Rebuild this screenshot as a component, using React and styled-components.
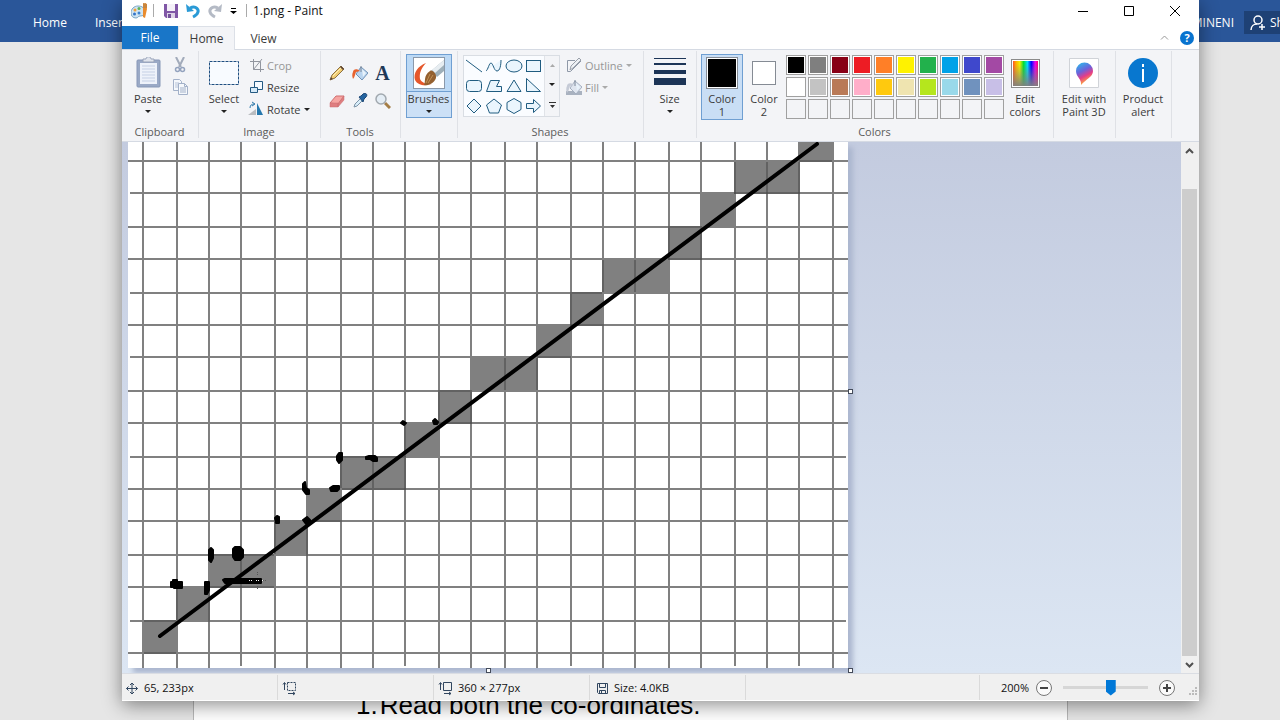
import { useState } from "react";
import styled, { createGlobalStyle, css } from "styled-components";

const palette = [
  "#000000", "#7f7f7f", "#880015", "#ed1c24", "#ff7f27", "#fff200", "#22b14c", "#00a2e8", "#3f48cc", "#a349a4",
  "#ffffff", "#c3c3c3", "#b97a57", "#ffaec9", "#ffc90e", "#efe4b0", "#b5e61d", "#99d9ea", "#7092be", "#c8bfe7",
  null, null, null, null, null, null, null, null, null, null,
];

const shapes = [
  ["Line", <path d="M2 4l16 12" />],
  ["Curve", <path d="M2 15c2-1 3-8 5-8s3 8 6 8c3 0 4-6 4-11" />],
  ["Oval", <ellipse cx="10" cy="10" rx="8" ry="6" />],
  ["Rectangle", <rect x="2.5" y="4.5" width="14" height="11" />],
  ["Rounded rectangle", <rect x="2.5" y="4.5" width="15" height="11" rx="3" />],
  ["Polygon", <path d="M6.500 4.500h9l-3 6h5v5h-15z" />],
  ["Triangle", <path d="M10 4l7 11.500H3z" />],
  ["Right triangle", <path d="M2.500 2.500v13h14z" />],
  ["Diamond", <path d="M10 3l7 7-7 7-7-7z" />],
  ["Pentagon", <path d="M10 3l7.500 6-3 8h-9l-3-8z" />],
  ["Hexagon", <path d="M10 2.500l7 4v7l-7 4-7-4v-7z" />],
  ["Right arrow", <path d="M2.500 7.500h7v-4l7 6.500-7 6.500v-4h-7z" />],
];

// grid line positions in canvas coordinates
const columns = [15, 49, 81, 113, 147, 179, 213, 245, 277, 311, 343, 377, 409, 443, 475, 507, 541, 573, 607, 639, 671, 705];
const rows = [19, 51, 85, 117, 151, 183, 215, 249, 281, 315, 347, 379, 413, 445, 479, 511];
const shortColumns = [113, 277, 443, 607, 671];
const shortRows = [51, 151, 215, 315, 479];

// [x, y, width, height]
const cells = [
  [14, 478, 36, 34], [48, 444, 34, 36], [80, 412, 34, 34], [112, 412, 36, 34],
  [146, 378, 34, 36], [178, 346, 36, 34], [212, 314, 34, 34], [244, 314, 34, 34],
  [276, 280, 36, 36], [310, 248, 34, 34], [342, 214, 36, 36], [376, 214, 34, 36],
  [408, 182, 36, 34], [442, 150, 34, 34], [474, 116, 34, 36], [506, 116, 36, 36],
  [540, 84, 34, 34], [572, 50, 36, 36], [606, 18, 34, 34], [638, 18, 34, 34], [670, 0, 35, 20],
];

const edges =
  "M16 479h32M16 511h32M49 446v32M81 446v34M82 413h64M113 414v32M82 445h64M147 380v32M179 380v34M180 379h34M213 316v30M214 315h64M245 316v30M214 347h64M277 316v32M277 281v34M311 250v32M310 249h34M343 250v32M310 281h34M377 216v32M409 216v32M409 215h34M443 152v32M442 151h32M442 183h34M475 118v32M507 118v32M541 86v32M540 85h34M573 86v32M540 117h34M607 20v32M639 20v32M606 51h66M671 20v32M671 19h33";

const dabs =
  "M43 440h2v-2h4v2h5v6h-8v-1h-3zM77 440h4v8l-2 4h-2zM81 408l2-2 2 2v8l-2 4-2-2zM105 407l2-2h5l3 3v7l-3 3h-5l-2-3zM95 438l2-1h36v4H97zM147 376l2-2 2 1v6h-3zM175 378l4-3 3 3v3l-4 1zM175 342l2-2 1 6 3 2v4h-3l-3-4zM202 346l3-2h6v3l-2 2h-6zM209 314l2-3h3v7l-3 3-2-3zM238 315l3-1h6l2 2v3h-4l-3-2h-4zM273 281l2-2 3 2-2 2zM305 279l2-2 3 3-1 2h-3z";

const Icon = ({ size = 16, children }) => (
  <svg width={size} height={size} viewBox={`0 0 ${size} ${size}`} fill="none" aria-hidden="true">
    {children}
  </svg>
);

const Arrow = ({ color = "#222" }) => (
  <svg width="6" height="3" viewBox="0 0 6 3" aria-hidden="true">
    <path d="M0 0h6L3 3z" fill={color} />
  </svg>
);

const PaintLogo = () => (
  <Icon>
    <path d="M7 3C3 3 0 6 0 10c0 3 2 5 5 5 2 0 2-2 4-2 3 0 5-1 5-4 0-4-3-6-7-6z" fill="#cfe4f2" stroke="#7ba7c5" />
    <circle cx="4" cy="7" r="1.500" fill="#f0a13a" />
    <circle cx="8" cy="5.500" r="1.500" fill="#5db357" />
    <circle cx="3.500" cy="11" r="1.500" fill="#3375c8" />
    <circle cx="8" cy="10" r="1.500" fill="#3e83cf" />
    <path d="M12 1l3-1 1 6-2 9-2-1z" fill="#e98b2d" />
    <path d="M12 0l4 1v4h-4z" fill="#c9863e" />
  </Icon>
);

const SaveIcon = () => (
  <Icon>
    <path d="M1 1h14v14H3l-2-2z" fill="#8057a6" />
    <path d="M4 1h8v7H4z" fill="#f4f0f8" />
    <path d="M4 10h8v5H4z" fill="#ddd3e6" />
    <path d="M5 11h3v4H5z" fill="#72519a" />
  </Icon>
);

const UndoIcon = ({ flip }) => (
  <Icon>
    <g transform={flip ? "translate(16 0) scale(-1 1)" : undefined}>
      <path d="M5 5c6-3 10 2 7 6-1 1-2 2-4 3" stroke={flip ? "#b4bac5" : "#2a9ad6"} strokeWidth="3" />
      <path d="M1 1l1 8 7-1z" fill={flip ? "#b4bac5" : "#2a9ad6"} />
    </g>
  </Icon>
);

const PasteIcon = () => (
  <Icon size={32}>
    <rect x="5" y="3" width="23" height="27" rx="1" fill="#9aa9c6" stroke="#8797b7" />
    <path d="M8 6h17v21H8z" fill="#eef2fa" />
    <path d="M10 9h13M10 12h13M10 15h13M10 18h13M10 21h13M10 24h13" stroke="#c5d0e5" />
    <path d="M11 5V2h3c0-3 5-3 5 0h3v3z" fill="#dfe3ec" stroke="#9aa4b9" />
  </Icon>
);

const CutIcon = () => (
  <Icon>
    <path d="M4 0l5 10M12 0L7 10" stroke="#a2abbb" strokeWidth="2" />
    <circle cx="5.500" cy="12.500" r="2" stroke="#94a3be" strokeWidth="1.500" />
    <circle cx="10.500" cy="12.500" r="2" stroke="#94a3be" strokeWidth="1.500" />
  </Icon>
);

const CopyIcon = () => (
  <Icon>
    <path d="M1.500.5h6l2 2v9h-8z" fill="#f5f8fc" stroke="#a3b1c9" />
    <path d="M3 4h4M3 6h4M3 8h3" stroke="#b7c3d8" />
    <path d="M6.500 4.500h6l3 3v8h-9z" fill="#f5f8fc" stroke="#a3b1c9" />
    <path d="M12.500 4.500v3h3M8 9h6M8 11h6M8 13h6" stroke="#a3b1c9" />
  </Icon>
);

const SelectIcon = () => (
  <Icon size={32}>
    <rect x="1.500" y="4.500" width="29" height="23" fill="#f8fbff" stroke="#1e4e80" strokeDasharray="3 1" />
  </Icon>
);

const CropIcon = () => (
  <Icon>
    <path d="M5.500 2v10.500H16M2 4.500h10.500V15M5.500 12.500L14 2" stroke="#92969f" />
  </Icon>
);

const ResizeIcon = () => (
  <Icon>
    <path d="M6.500 2.500h8v8h-8z" fill="#f5faff" stroke="#245a82" />
    <path d="M2.500 8.500h7v5h-7z" fill="#d6eaf8" stroke="#245a82" />
  </Icon>
);

const RotateIcon = () => (
  <Icon>
    <path d="M0 14l8-6v6z" fill="#b9bcc0" />
    <path d="M9 2l6 12H9z" fill="#2577ad" />
    <path d="M2 7c0-3 2-4 4-4M4 1l3 2-3 2" stroke="#2f79aa" />
  </Icon>
);

const PencilIcon = () => (
  <Icon>
    <path d="M1 15l2-5 9-9 3 3-9 9z" fill="#f1cd74" stroke="#8d7142" />
    <path d="M4 11l8-8" stroke="#fff0b8" />
    <path d="M1 15l1-3 2 2zM11 2l1-1 3 3-1 1z" fill="#5b4335" />
  </Icon>
);

const BucketIcon = ({ muted }) => (
  <Icon>
    {muted && <path d="M0 12h16v4H0z" fill="#a9b2c0" />}
    <path d="M9 2l7 6-6 7-6-6z" fill={muted ? "#dfe5ef" : "#b9d4ef"} stroke={muted ? "#a4afc0" : "#7292b6"} />
    <path d="M10 4l4 4-3 4z" fill="#e8f2fb" />
    <path d="M8 6c-3-3-7-2-7 1-1 2-1 4 0 7 2-2 2-5 3-7z" fill={muted ? "#c5cad6" : "#e8622e"} />
    <path d="M9 1v6" stroke="#7b8798" />
  </Icon>
);

const EraserIcon = () => (
  <Icon>
    <path d="M1 10l6-7h8l-6 8z" fill="#f6a5a2" stroke="#cf6f70" />
    <path d="M1 10h8v4H1zM9 14l6-7V3l-6 8z" fill="#df7e80" stroke="#c86f70" strokeWidth=".5" />
  </Icon>
);

const DropperIcon = () => (
  <Icon>
    <path d="M2 14l1-3 6-6 2 2-6 6z" fill="#d8edf9" stroke="#7d94a8" />
    <path d="M7 4l2-1 2-2c3-2 5 1 3 3l-2 2-1 3z" fill="#24649f" stroke="#1d4777" />
  </Icon>
);

const ZoomIcon = () => (
  <Icon>
    <path d="M10 10l5 5" stroke="#a47d46" strokeWidth="3" />
    <circle cx="6" cy="6" r="5" fill="#e4edf5" stroke="#a1a8af" strokeWidth="1.500" />
  </Icon>
);

const BrushIcon = () => (
  <Icon size={32}>
    <rect x=".5" y=".5" width="31" height="31" fill="#fff" stroke="#8b99aa" />
    <path d="M13 6C5 9 0 16 2 23c3 6 11 6 17 4-5 1-10-1-12-5-1-5 1-11 6-16z" fill="#e5572b" />
    <path d="M31 3v11l-7 6-6-6z" fill="#9eafb9" />
    <path d="M31 3v5l-9 8-3-3z" fill="#e7edf1" />
    <path d="M17 14c2-2 7 3 6 7-2 6-9 8-12 7 2-4-1-9 6-14z" fill="#94602f" />
    <path d="M17 17l-4 9M20 18l-5 8" stroke="#c29257" />
  </Icon>
);

const OutlineIcon = () => (
  <Icon>
    <path d="M9 3.500H1.500v11h3L15 4" stroke="#8e98a7" />
    <path d="M4 13l1-4 8-8 2 2-8 8z" fill="#edf0f4" stroke="#9aa0aa" />
  </Icon>
);

const GlobalStyle = createGlobalStyle`
  * { box-sizing: border-box; }
  body {
    margin: 0;
    overflow: hidden;
    font-family: "Open Sans", "Noto Sans", sans-serif;
    font-size: 12px;
    color: #3b3b3b;
  }
  button {
    font: inherit;
    color: inherit;
    background: none;
    border: 0;
    padding: 0;
  }
  svg { display: block; flex: none; }
`;

const Desktop = styled.div`
  position: relative;
  display: flex;
  flex-direction: column;
  height: 100vh;
  background: #e6e6e6;
  overflow: hidden;
`;

const WordBar = styled.header`
  display: flex;
  align-items: center;
  gap: 28px;
  height: 42px;
  padding: 3px 0 0 33px;
  background: #2a5699;
  color: #fff;
  font-size: 12px;
`;

const WordRight = styled.div`
  display: flex;
  align-items: center;
  gap: 10px;
  margin-left: auto;
`;

const ShareButton = styled.button`
  display: flex;
  align-items: center;
  gap: 4px;
  width: 36px;
  height: 23px;
  padding-left: 6px;
  background: #1e4175;
  overflow: hidden;
  white-space: nowrap;
`;

const WordPage = styled.main`
  flex: 1;
  display: flex;
  align-items: flex-end;
  margin: 0 212px 0 193px;
  padding-left: 162px;
  background: #fff;
  border: solid #b8b8b8;
  border-width: 0 1px;
`;

const Step = styled.p`
  display: flex;
  gap: 2px;
  margin: 0;
  color: #000;
  font: 26px/30px "Liberation Sans", Arial, sans-serif;
`;

const Window = styled.section`
  position: absolute;
  inset: 0 81px 19px 122px;
  display: flex;
  flex-direction: column;
  background: #fff;
  box-shadow: 0 4px 18px rgba(0, 0, 0, 0.45);
`;

const TitleBar = styled.div`
  display: flex;
  align-items: center;
  height: 26px;
  padding: 0 1px 5px 9px;
  color: #111;
`;

const QuickButton = styled.button`
  display: grid;
  place-items: center;
  width: ${({ $narrow }) => ($narrow ? 14 : 22)}px;
  height: 22px;
`;

const Divider = styled.span`
  width: 1px;
  height: 13px;
  margin: 0 6px;
  background: #aaa;
`;

const Title = styled.h1`
  margin: 0;
  font-size: 12px;
  font-weight: 400;
`;

const WindowControls = styled.div`
  display: flex;
  margin-left: auto;
`;

const ControlButton = styled.button`
  display: grid;
  place-items: center;
  width: 46px;
  height: 22px;
`;

const Tabs = styled.nav`
  display: flex;
  height: 24px;
  border-bottom: 1px solid #d5dae3;
`;

const Tab = styled.button`
  width: ${({ $kind }) => ($kind === "file" ? 56 : 57)}px;
  height: 24px;
  font-size: 12px;
  ${({ $kind }) =>
    $kind === "file" &&
    css`
      height: 23px;
      background: #1976c8;
      color: #fff;
    `}
  ${({ $kind }) =>
    $kind === "active" &&
    css`
      background: #f3f4f7;
      border: solid #dce0e7;
      border-width: 1px 1px 0;
    `}
`;

const TabTools = styled.div`
  display: flex;
  align-items: center;
  gap: 11px;
  margin-left: auto;
  padding-right: 5px;
`;

const Help = styled.button`
  width: 14px;
  height: 14px;
  border-radius: 50%;
  background: #0873cf;
  color: #fff;
  font-size: 11px;
  font-weight: 700;
  line-height: 14px;
`;

const Ribbon = styled.div`
  display: flex;
  height: 92px;
  background: #f3f4f7;
  border-bottom: 1px solid #d5dae3;
`;

const Group = styled.div`
  display: flex;
  flex: none;
  flex-direction: column;
  width: ${({ $width }) => $width}px;
  margin: 1px 0 3px;
  padding: 3px 5px 0 4px;
  border-right: 1px solid #dfe1e6;
`;

const GroupBody = styled.div`
  display: flex;
  flex: 1;
  justify-content: ${({ $center }) => ($center ? "center" : "flex-start")};
`;

const GroupLabel = styled.div`
  height: 13px;
  line-height: 13px;
  font-size: 11px;
  text-align: center;
  color: #5c5c5c;
`;

const BigButton = styled.button`
  display: flex;
  flex: none;
  flex-direction: column;
  align-items: center;
  width: ${({ $width = 42 }) => $width}px;
  height: ${({ $tall }) => ($tall ? 66 : 64)}px;
  padding-top: 2px;
  border: 1px solid transparent;
  font-size: 11px;
  line-height: 13px;
  white-space: nowrap;
  ${({ $selected }) =>
    $selected &&
    css`
      background: #c9def5;
      border-color: #6f9fd2;
    `}
  ${({ $split }) =>
    $split &&
    css`
      background: linear-gradient(#bcd9f5 36px, #6f9fd2 36px 37px, #cce0f6 37px);
    `}
`;

const BigLabel = styled.span`
  flex: none;
  margin: 3px 0 5px;
`;

const SmallColumn = styled.div`
  display: flex;
  flex-direction: column;
  margin-left: ${({ $gap = 0 }) => $gap}px;
`;

const SmallButton = styled.button`
  display: flex;
  align-items: center;
  gap: 3px;
  height: 22px;
  font-size: 11px;
  color: ${({ disabled }) => (disabled ? "#969696" : "inherit")};
`;

const ToolGrid = styled.div`
  display: grid;
  grid-template-columns: repeat(3, 23px);
  grid-auto-rows: 28px;
  padding-top: 5px;
`;

const ToolButton = styled.button`
  display: grid;
  place-items: center;
  color: #1e3857;
  font: 700 20px/20px "Liberation Serif", serif;
`;

const Gallery = styled.div`
  display: flex;
  height: 62px;
  margin: 1px 6px 0 1px;
  border: 1px solid #d9dde3;
  background: #fafcff;
`;

const ShapeGrid = styled.div`
  display: grid;
  grid-template-columns: repeat(4, 20px);
  grid-auto-rows: 20px;
  stroke: #205c80;
`;

const GalleryScroll = styled.div`
  display: grid;
  width: 15px;
  background: #f3f4f7;
  border-left: 1px solid #e0e3e8;
`;

const SizeLines = styled.span`
  display: flex;
  flex: none;
  flex-direction: column;
  justify-content: space-between;
  width: 32px;
  height: 32px;
  padding: 1px 0 4px;
`;

const SizeLine = styled.span`
  height: ${({ $h }) => $h}px;
  background: #1d3557;
`;

const IconSlot = styled.span`
  display: grid;
  flex: none;
  place-items: center;
  height: 32px;
`;

const Chip = styled.span`
  width: ${({ $size }) => $size}px;
  height: ${({ $size }) => $size}px;
  border: 1px solid #858b94;
  background: ${({ $color }) => $color};
  box-shadow: inset 0 0 0 1px #fff;
`;

const Palette = styled.div`
  display: grid;
  grid-template-columns: repeat(10, 20px);
  grid-auto-rows: 20px;
  gap: 2px;
  margin: 1px 0 0 1px;
`;

const Swatch = styled.button`
  border: 1px solid #a0a0a0;
  background: ${({ $color }) => $color || "#f3f4f7"};
  box-shadow: inset 0 0 0 1px ${({ $color }) => ($color ? "#fff" : "#f3f4f7")};
`;

const Rainbow = styled.span`
  width: 29px;
  height: 29px;
  border: 1px solid #8b8b8b;
  box-shadow: inset 0 0 0 1px #fff;
  background:
    linear-gradient(transparent 15%, #808080),
    linear-gradient(90deg, #f33, #fa0, #ee0, #0d3, #0df, #00f, #e0e, #f04);
`;

const Workspace = styled.div`
  display: flex;
  flex: 1;
  min-height: 0;
  background: linear-gradient(#c3cbdf, #dce6f3);
`;

const Viewport = styled.div`
  flex: 1;
  min-width: 0;
  padding-left: 6px;
  overflow: hidden;
`;

const Sheet = styled.div`
  position: relative;
  width: max-content;
  background: #fff;
  box-shadow: 5px 5px 5px #acb7cf;
`;

const Handle = styled.span`
  position: absolute;
  width: 5px;
  height: 5px;
  border: 1px solid #444b5a;
  background: #fff;
  ${({ $at }) => $at === "right" && "top: 247px; right: -5px;"}
  ${({ $at }) => $at === "bottom" && "bottom: -5px; left: 358px;"}
  ${({ $at }) => $at === "corner" && "bottom: -5px; right: -5px;"}
`;

const ScrollBar = styled.div`
  display: flex;
  flex-direction: column;
  width: 18px;
  padding: 0 2px 0 1px;
  background: #f0f0f0;
`;

const ScrollButton = styled.button`
  display: grid;
  place-items: center;
  height: 17px;
`;

const ScrollTrack = styled.div`
  flex: 1;
  padding-top: 30px;
`;

const ScrollThumb = styled.div`
  height: 100%;
  background: #cdcdcd;
`;

const StatusBar = styled.footer`
  display: flex;
  height: 28px;
  padding-top: 1px;
  background: #f0f0f0;
  border-top: 1px solid #dadde3;
  border-bottom: 1px solid #fff;
  color: #111;
  font-size: 11px;
`;

const StatusCell = styled.div`
  display: flex;
  align-items: center;
  gap: 4px;
  width: 156px;
  padding-left: 4px;
  border-right: 1px solid #dadada;
  &:first-child {
    padding-left: 2px;
  }
`;

const ZoomArea = styled.div`
  display: flex;
  align-items: center;
  gap: 7px;
  margin-left: auto;
  padding: 0 1px 0 21px;
  border-left: 1px solid #dadada;
`;

const RoundButton = styled.button`
  display: grid;
  place-items: center;
  width: 16px;
  height: 16px;
  border: 1px solid #777;
  border-radius: 50%;
  background: #fafafa;
`;

const ZoomSlider = styled.input`
  appearance: none;
  width: 85px;
  height: 18px;
  margin: 0 4px;
  background: linear-gradient(#d6d6d6, #d6d6d6) center / 100% 3px no-repeat;
  &::-webkit-slider-thumb {
    appearance: none;
    width: 10px;
    height: 16px;
    background: #0078d7;
    clip-path: polygon(0 0, 100% 0, 100% 75%, 50% 100%, 0 75%);
  }
`;

const Drawing = () => (
  <svg width="720" height="526" viewBox="0 0 720 526" role="img" aria-label="Line drawn on a pixel grid">
    <g stroke="#808080" strokeWidth="2">
      {columns.map((x) => (
        <path key={x} d={`M${x} 0V${shortColumns.includes(x) ? 524 : 526}`} />
      ))}
      {rows.map((y) => (
        <path key={y} d={shortRows.includes(y) ? `M2 ${y}H${y === 315 || y === 479 ? 718 : 720}` : `M0 ${y}H720`} />
      ))}
    </g>
    {cells.map(([x, y, w, h]) => (
      <rect key={`${x}-${y}`} x={x} y={y} width={w} height={h} fill="#808080" />
    ))}
    <path d={edges} stroke="#444" strokeWidth="1" />
    <path d="M32 494L689 2" stroke="#000" strokeWidth="4" strokeLinecap="round" />
    <path d={dabs} fill="#000" stroke="#000" strokeWidth="2" strokeLinejoin="round" />
    <path d="M121 438.500h3M134 438.500h1M129.500 430v3M129.500 444v3M128 438.500h3" stroke="#fff" strokeDasharray="1 1" />
    <path d="M129.500 430v3M129.500 444v3M135 438.500h4" stroke="#555" strokeDasharray="1 1" />
  </svg>
);

const App = () => {
  const [zoom, setZoom] = useState(57);

  return (
    <Desktop>
      <GlobalStyle />
      <WordBar>
        <span>Home</span>
        <span>Insert</span>
        <WordRight>
          <span>MINENI</span>
          <ShareButton>
            <Icon>
              <circle cx="8" cy="5" r="4" stroke="#fff" strokeWidth="1.500" />
              <path d="M1 15c0-4 3-6 6-6M12 9v6M9 12h6" stroke="#fff" strokeWidth="1.500" />
            </Icon>
            Share
          </ShareButton>
        </WordRight>
      </WordBar>
      <WordPage>
        <Step>
          <span>1.</span>
          <span>Read both the co-ordinates.</span>
        </Step>
      </WordPage>

      <Window>
        <TitleBar>
          <PaintLogo />
          <Divider />
          <QuickButton aria-label="Save"><SaveIcon /></QuickButton>
          <QuickButton aria-label="Undo"><UndoIcon /></QuickButton>
          <QuickButton aria-label="Redo"><UndoIcon flip /></QuickButton>
          <QuickButton $narrow aria-label="Customize toolbar">
            <svg width="7" height="6"><path d="M1 0h5v1H1zM0 3h7L3.500 6z" /></svg>
          </QuickButton>
          <Divider />
          <Title>1.png - Paint</Title>
          <WindowControls>
            <ControlButton aria-label="Minimize">
              <Icon size={10}><path d="M0 5.500h10" stroke="#000" /></Icon>
            </ControlButton>
            <ControlButton aria-label="Maximize">
              <Icon size={10}><path d="M.5.500h9v9h-9z" stroke="#000" /></Icon>
            </ControlButton>
            <ControlButton aria-label="Close">
              <Icon size={10}><path d="M0 0l10 10M10 0L0 10" stroke="#000" /></Icon>
            </ControlButton>
          </WindowControls>
        </TitleBar>

        <Tabs>
          <Tab $kind="file">File</Tab>
          <Tab $kind="active">Home</Tab>
          <Tab>View</Tab>
          <TabTools>
            <button aria-label="Collapse ribbon">
              <svg width="9" height="5" fill="none"><path d="M1 4.500l3.500-3.500L8 4.500" stroke="#999" /></svg>
            </button>
            <Help aria-label="Help">?</Help>
          </TabTools>
        </Tabs>

        <Ribbon>
          <Group $width={77}>
            <GroupBody>
              <BigButton $width={44}>
                <PasteIcon />
                <BigLabel>Paste</BigLabel>
                <Arrow />
              </BigButton>
              <SmallColumn $gap={2}>
                <SmallButton aria-label="Cut"><CutIcon /></SmallButton>
                <SmallButton aria-label="Copy"><CopyIcon /></SmallButton>
              </SmallColumn>
            </GroupBody>
            <GroupLabel>Clipboard</GroupLabel>
          </Group>

          <Group $width={122}>
            <GroupBody>
              <BigButton>
                <SelectIcon />
                <BigLabel>Select</BigLabel>
                <Arrow />
              </BigButton>
              <SmallColumn $gap={3}>
                <SmallButton disabled><CropIcon />Crop</SmallButton>
                <SmallButton><ResizeIcon />Resize</SmallButton>
                <SmallButton><RotateIcon />Rotate<Arrow /></SmallButton>
              </SmallColumn>
            </GroupBody>
            <GroupLabel>Image</GroupLabel>
          </Group>

          <Group $width={80}>
            <GroupBody>
              <ToolGrid>
                <ToolButton aria-label="Pencil"><PencilIcon /></ToolButton>
                <ToolButton aria-label="Fill with color"><BucketIcon /></ToolButton>
                <ToolButton>A</ToolButton>
                <ToolButton aria-label="Eraser"><EraserIcon /></ToolButton>
                <ToolButton aria-label="Color picker"><DropperIcon /></ToolButton>
                <ToolButton aria-label="Magnifier"><ZoomIcon /></ToolButton>
              </ToolGrid>
            </GroupBody>
            <GroupLabel>Tools</GroupLabel>
          </Group>

          <Group $width={57}>
            <GroupBody $center>
              <BigButton $width={46} $selected $split>
                <BrushIcon />
                <BigLabel>Brushes</BigLabel>
                <Arrow />
              </BigButton>
            </GroupBody>
          </Group>

          <Group $width={186}>
            <GroupBody>
              <Gallery>
                <ShapeGrid>
                  {shapes.map(([name, shape]) => (
                    <button key={name} aria-label={name}>
                      <svg width="20" height="20" viewBox="0 0 20 20" fill="#eaf5fd">{shape}</svg>
                    </button>
                  ))}
                </ShapeGrid>
                <GalleryScroll>
                  <ToolButton aria-label="Scroll up"><svg width="5" height="3"><path d="M0 3h5L2.500 0z" fill="#aaa" /></svg></ToolButton>
                  <ToolButton aria-label="Scroll down"><Arrow /></ToolButton>
                  <ToolButton aria-label="More shapes"><svg width="7" height="6"><path d="M0 0h7v1H0zM1 3h5L3.500 6z" fill="#333" /></svg></ToolButton>
                </GalleryScroll>
              </Gallery>
              <SmallColumn>
                <SmallButton disabled><OutlineIcon />Outline<Arrow color="#aaa" /></SmallButton>
                <SmallButton disabled><BucketIcon muted />Fill<Arrow color="#aaa" /></SmallButton>
              </SmallColumn>
            </GroupBody>
            <GroupLabel>Shapes</GroupLabel>
          </Group>

          <Group $width={53}>
            <GroupBody $center>
              <BigButton>
                <SizeLines>
                  <SizeLine $h={1} />
                  <SizeLine $h={2} />
                  <SizeLine $h={4} />
                  <SizeLine $h={7} />
                </SizeLines>
                <BigLabel>Size</BigLabel>
                <Arrow />
              </BigButton>
            </GroupBody>
          </Group>

          <Group $width={357}>
            <GroupBody>
              <BigButton $tall $selected>
                <IconSlot><Chip $size={32} $color="#000" /></IconSlot>
                <BigLabel>Color<br />1</BigLabel>
              </BigButton>
              <BigButton $tall>
                <IconSlot><Chip $size={24} $color="#fff" /></IconSlot>
                <BigLabel>Color<br />2</BigLabel>
              </BigButton>
              <Palette>
                {palette.map((color, i) => (
                  <Swatch key={i} $color={color} aria-label={color || "Empty color"} />
                ))}
              </Palette>
              <BigButton $tall>
                <IconSlot><Rainbow /></IconSlot>
                <BigLabel>Edit<br />colors</BigLabel>
              </BigButton>
            </GroupBody>
            <GroupLabel>Colors</GroupLabel>
          </Group>

          <Group $width={62}>
            <GroupBody $center>
              <BigButton $tall $width={56}>
                <Icon size={32}>
                  <defs>
                    <linearGradient id="drop" x1="0" y1="0" x2=".4" y2="1">
                      <stop offset="0" stopColor="#20c8ee" />
                      <stop offset=".45" stopColor="#6b62db" />
                      <stop offset=".7" stopColor="#e53c88" />
                      <stop offset="1" stopColor="#ffb536" />
                    </linearGradient>
                  </defs>
                  <path d="M1.500 1.500h29v29h-29z" fill="#fff" stroke="#d0d3d8" />
                  <path d="M13 28c1-6-5-8-5-14a8 8 0 0 1 17 0c0 6-7 8-12 14z" fill="url(#drop)" />
                </Icon>
                <BigLabel>Edit with<br />Paint 3D</BigLabel>
              </BigButton>
            </GroupBody>
          </Group>

          <Group $width={56}>
            <GroupBody $center>
              <BigButton $tall $width={46}>
                <Icon size={32}>
                  <circle cx="16" cy="16" r="15" fill="#0877cf" />
                  <path d="M16 12v13M16 7v3" stroke="#fff" strokeWidth="2" />
                </Icon>
                <BigLabel>Product<br />alert</BigLabel>
              </BigButton>
            </GroupBody>
          </Group>
        </Ribbon>

        <Workspace>
          <Viewport>
            <Sheet>
              <Drawing />
              <Handle $at="right" />
              <Handle $at="bottom" />
              <Handle $at="corner" />
            </Sheet>
          </Viewport>
          <ScrollBar>
            <ScrollButton aria-label="Scroll up">
              <svg width="9" height="6" fill="none"><path d="M1 5l3.500-3.500L8 5" stroke="#505050" strokeWidth="2" /></svg>
            </ScrollButton>
            <ScrollTrack><ScrollThumb /></ScrollTrack>
            <ScrollButton aria-label="Scroll down">
              <svg width="9" height="6" fill="none"><path d="M1 1l3.500 3.500L8 1" stroke="#505050" strokeWidth="2" /></svg>
            </ScrollButton>
          </ScrollBar>
        </Workspace>

        <StatusBar>
          <StatusCell>
            <Icon><path d="M8 3v11M2.500 8.500h11M6 5l2-2 2 2M6 12l2 2 2-2M4.500 6.500l-2 2 2 2M11.500 6.500l2 2-2 2" stroke="#31465f" /></Icon>
            65, 233px
          </StatusCell>
          <StatusCell>
            <Icon>
              <path d="M2.500 3v7M1 4.500l1.500-2L4 4.500M6 13.500h7M11 12l2 1.500-2 1.500" stroke="#31465f" />
              <path d="M5.500 2.500h8v8h-8z" stroke="#31465f" strokeDasharray="2 1" />
            </Icon>
          </StatusCell>
          <StatusCell>
            <Icon>
              <path d="M2.500 3v7M1 4.500l1.500-2L4 4.500M6 13.500h7M11 12l2 1.500-2 1.500M5.500 2.500h8v8h-8z" stroke="#31465f" />
            </Icon>
            360 × 277px
          </StatusCell>
          <StatusCell>
            <Icon><path d="M3.500 3.500h10v10h-9l-1-1zM5.500 3.500v4h6v-4M5.500 13.500v-3h6v3M7.500 11v2" stroke="#31465f" /></Icon>
            Size: 4.0KB
          </StatusCell>
          <ZoomArea>
            <span>200%</span>
            <RoundButton aria-label="Zoom out"><Icon size={8}><path d="M0 4h8" stroke="#444" strokeWidth="2" /></Icon></RoundButton>
            <ZoomSlider type="range" aria-label="Zoom" value={zoom} onChange={(e) => setZoom(e.target.value)} />
            <RoundButton aria-label="Zoom in"><Icon size={8}><path d="M0 4h8M4 0v8" stroke="#444" strokeWidth="2" /></Icon></RoundButton>
            <Icon><path d="M13 7h2v2h-2zM10 10h2v2h-2zM13 10h2v2h-2zM7 13h2v2H7zM10 13h2v2h-2zM13 13h2v2h-2z" fill="#bbb" /></Icon>
          </ZoomArea>
        </StatusBar>
      </Window>
    </Desktop>
  );
};

export default App;
